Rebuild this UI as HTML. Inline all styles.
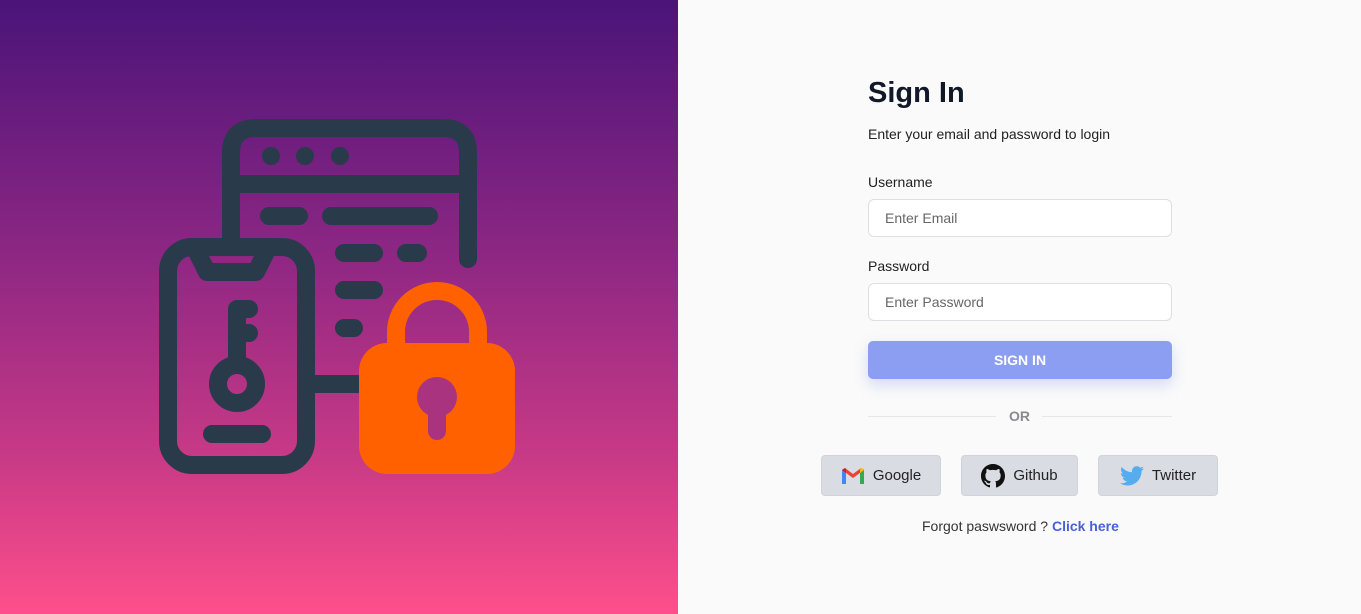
<!DOCTYPE html>
<html><head><meta charset="utf-8"><style>
*{margin:0;padding:0;box-sizing:border-box}
body{width:1361px;height:614px;overflow:hidden;font-family:"Liberation Sans",sans-serif;background:#fafafa;position:relative}
.left{position:absolute;left:0;top:0;width:678px;height:614px;background:linear-gradient(180deg,#4a1479 0%,#8b2683 40%,#c93a86 75%,#ff4f8b 100%)}
.a{position:absolute}
h1{position:absolute;left:868px;top:77px;font-size:29px;font-weight:bold;color:#111827}
.t{font-size:14px;color:#222}
.inp{position:absolute;left:868px;width:304px;height:38px;border:1px solid #dedfe3;border-radius:6px;background:#fff;font-size:14px;color:#666;padding:10px 16px}
.btn{position:absolute;left:868px;top:341px;width:304px;height:38px;border-radius:5px;background:#8c9ef2;color:#fff;font-weight:bold;font-size:14px;text-align:center;line-height:38px;box-shadow:0 6px 14px rgba(140,158,242,.35)}
.soc{position:absolute;top:455px;height:41px;background:#d9dce3;border:1px solid #d0d3da;border-radius:4px;font-size:15px;color:#222;display:flex;align-items:center;justify-content:center;gap:8px}
</style></head><body>
<div class="left">
<svg width="678" height="614" style="position:absolute;left:0;top:0" fill="none" stroke="#293a4b" stroke-width="18" stroke-linecap="round" stroke-linejoin="round">
<path d="M231 240 V153 Q231 128 256 128 H443 Q468 128 468 153 V259"/>
<path d="M231 184 H468"/>
<g fill="#293a4b" stroke="none"><circle cx="271" cy="156" r="9"/><circle cx="305" cy="156" r="9"/><circle cx="340" cy="156" r="9"/></g>
<path d="M269 216 H299 M331 216 H429 M344 253 H374 M406 253 H418 M344 290 H374 M344 328 H354"/>
<rect x="168" y="247" width="138" height="218" rx="24"/>
<path d="M197 252 L207 272 H256 L266 252"/>
<path d="M237 362 V309 H249 M237 333 H249"/>
<circle cx="237" cy="384" r="19"/>
<path d="M212 434 H262"/>
<path d="M315 384 H365"/>
<path d="M396 350 V332 A41 41 0 0 1 478 332 V350" stroke="#ff6000"/>
<rect x="359" y="343" width="156" height="131" rx="28" fill="#ff6000" stroke="none"/>
<circle cx="437" cy="397" r="20" fill="#a9337f" stroke="none"/>
<path d="M437 400 V431" stroke="#a9337f"/>
</svg>
</div>
<h1>Sign In</h1>
<div class="a t" style="left:868px;top:126px">Enter your email and password to login</div>
<div class="a t" style="left:868px;top:174px">Username</div>
<div class="inp" style="top:199px">Enter Email</div>
<div class="a t" style="left:868px;top:258px">Password</div>
<div class="inp" style="top:283px">Enter Password</div>
<div class="btn">SIGN IN</div>
<div class="a" style="left:868px;top:416px;width:128px;height:1px;background:#e6e6e6"></div>
<div class="a" style="left:1042px;top:416px;width:130px;height:1px;background:#e6e6e6"></div>
<div class="a" style="left:1009px;top:408px;font-size:14px;font-weight:bold;color:#8a8a90">OR</div>
<div class="soc" style="left:821px;width:120px">
<svg width="24" height="18" viewBox="0 0 24 18"><path d="M1 17V3l4 3v11z" fill="#4285f4"/><path d="M19 17V6l4-3v14z" fill="#34a853"/><path d="M1 3l11 8 11-8-3-2-8 6-8-6z" fill="#ea4335"/><path d="M19 6l4-3V2l-3-1-1 1z" fill="#fbbc04"/><path d="M1 3L4 1l1 1v4z" fill="#c5221f"/></svg>Google</div>
<div class="soc" style="left:961px;width:117px">
<svg width="24" height="24" viewBox="0 0 16 16"><path fill="#111" d="M8 0C3.58 0 0 3.580 0 8c0 3.54 2.29 6.53 5.47 7.59.4.07.55-.17.55-.38v-1.33c-2.230.48-2.7-1.07-2.7-1.07-.36-.92-.89-1.17-.89-1.17-.73-.5.06-.49.06-.49.8.06 1.23.83 1.23.83.72 1.22 1.87.87 2.33.66.07-.52.28-.87.51-1.07-1.78-.2-3.65-.89-3.65-3.95 0-.87.31-1.59.82-2.150-.08-.2-.36-1.02.08-2.12 0 0 .67-.21 2.2.82a7.6 7.6 0 014 0c1.53-1.04 2.2-.82 2.2-.82.44 1.1.16 1.92.08 2.12.51.56.82 1.27.82 2.15 0 3.07-1.87 3.75-3.65 3.95.29.25.54.73.54 1.48v2.2c0 .21.15.46.55.38A8 8 0 0016 8c0-4.42-3.58-8-8-8z"/></svg>Github</div>
<div class="soc" style="left:1098px;width:120px">
<svg width="24" height="20" viewBox="0 0 24 20"><path fill="#55acee" d="M24 2.4c-.9.4-1.8.7-2.8.8 1-.6 1.8-1.6 2.2-2.7-1 .6-2 1-3.1 1.2A4.9 4.9 0 0012 6.2 14 14 0 011.7 1 4.9 4.9 0 003.2 7.6c-.8 0-1.6-.2-2.2-.6 0 2.4 1.7 4.4 3.9 4.8-.7.2-1.5.2-2.2.1.6 2 2.4 3.4 4.6 3.4A9.9 9.9 0 010 17.3 14 14 0 007.5 19.5c9.1 0 14-7.5 14-14v-.6c1-.7 1.8-1.6 2.5-2.5z"/></svg>Twitter</div>
<div class="a t" style="left:922px;top:518px;color:#333">Forgot paswsword ? <b style="color:#4a5fd8">Click here</b></div>
</body></html>
